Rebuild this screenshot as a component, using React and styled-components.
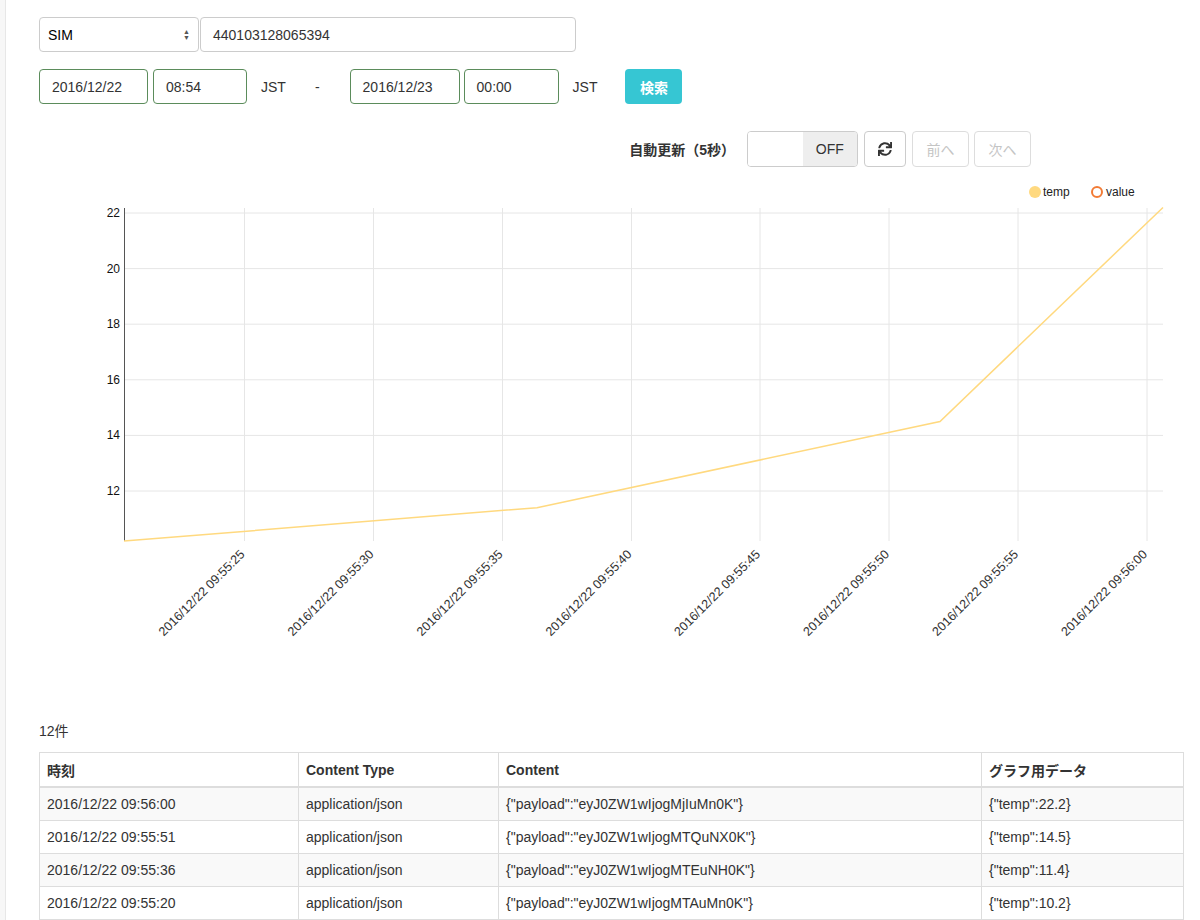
import React from "react";
import styled, { createGlobalStyle } from "styled-components";
import { FaSync } from "react-icons/fa";

const GlobalStyle = createGlobalStyle`
  html, body {
    margin: 0;
    padding: 0;
    background: #fff;
  }
  body {
    font-family: "Liberation Sans", "Noto Sans CJK JP", Arial, sans-serif;
    font-size: 14px;
    color: #333;
  }
`;

const Page = styled.div`
  display: flex;
  min-height: 920px;
`;

const SideEdge = styled.div`
  width: 5px;
  background: #f7f7f7;
  border-right: 1px solid #e7e7e7;
  flex-shrink: 0;
`;

const Main = styled.div`
  flex: 1;
  min-width: 0;
  padding: 17px 16px 0 33px;
`;

const Row = styled.div`
  display: flex;
  align-items: center;
  height: 35px;
  margin-bottom: ${(p) => p.mb || 0}px;
`;

const Select = styled.div`
  box-sizing: border-box;
  width: 160px;
  height: 35px;
  border: 1px solid #ccc;
  border-radius: 4px;
  padding: 0 8px;
  display: flex;
  align-items: center;
  justify-content: space-between;
  font-size: 14px;
  color: #000;
`;

const Arrows = styled.span`
  display: flex;
  flex-direction: column;
  font-size: 7px;
  line-height: 6px;
  color: #555;
`;

const Input = styled.div`
  box-sizing: border-box;
  width: ${(p) => p.w}px;
  height: 35px;
  margin-left: ${(p) => p.ml || 0}px;
  border: 1px solid ${(p) => (p.ok ? "#5b8c5b" : "#ccc")};
  border-radius: 4px;
  padding: 0 12px;
  display: flex;
  align-items: center;
  font-size: 14px;
  color: #333;
`;

const Label = styled.span`
  margin-left: ${(p) => p.ml || 0}px;
  font-size: 14px;
  color: #333;
`;

const SearchButton = styled.button`
  margin-left: 28px;
  width: 57px;
  height: 35px;
  border: none;
  border-radius: 4px;
  background: #36c6d3;
  color: #fff;
  font-family: inherit;
  font-size: 14px;
  font-weight: bold;
`;

const Toolbar = styled.div`
  display: flex;
  align-items: center;
  justify-content: flex-end;
  margin: 27px 153px 0 0;
`;

const ToolLabel = styled.span`
  font-weight: bold;
  font-size: 14px;
  color: #333;
  margin-right: 12px;
`;

const Switch = styled.div`
  box-sizing: border-box;
  width: 111px;
  height: 36px;
  border: 1px solid #ccc;
  border-radius: 4px;
  display: flex;
  overflow: hidden;
`;

const SwitchHalf = styled.div`
  flex: 1;
  background: ${(p) => (p.off ? "#eee" : "#fff")};
  display: flex;
  align-items: center;
  justify-content: center;
  font-size: 14px;
  color: #333;
`;

const ToolButton = styled.button`
  box-sizing: border-box;
  margin-left: ${(p) => p.ml || 6}px;
  width: ${(p) => p.w}px;
  height: 36px;
  border: 1px solid ${(p) => (p.disabled ? "#ddd" : "#ccc")};
  border-radius: 4px;
  background: #fff;
  color: ${(p) => (p.disabled ? "#c4c4c4" : "#333")};
  font-family: inherit;
  font-size: 14px;
  display: flex;
  align-items: center;
  justify-content: center;
  padding: 0;
`;

const ChartSvg = styled.svg`
  display: block;
  margin-top: 9px;
  font-family: "Liberation Sans", Arial, sans-serif;
`;

const Count = styled.div`
  font-size: 14px;
  color: #333;
  height: 20px;
  line-height: 20px;
  margin-bottom: 11px;
`;

const Table = styled.table`
  width: 100%;
  table-layout: fixed;
  border-collapse: collapse;
  font-size: 14px;
  color: #333;
`;

const Th = styled.th`
  text-align: left;
  font-weight: bold;
  height: 33px;
  padding: 0 7px;
  border: 1px solid #ddd;
  border-bottom: 2px solid #ddd;
  width: ${(p) => p.w || "auto"};
`;

const Tr = styled.tr`
  background: ${(p) => (p.odd ? "#f9f9f9" : "#fff")};
`;

const Td = styled.td`
  height: 32px;
  padding: 0 7px;
  border: 1px solid #ddd;
  white-space: nowrap;
`;

const rows = [
  ["2016/12/22 09:56:00", "application/json", '{"payload":"eyJ0ZW1wIjogMjIuMn0K"}', '{"temp":22.2}'],
  ["2016/12/22 09:55:51", "application/json", '{"payload":"eyJ0ZW1wIjogMTQuNX0K"}', '{"temp":14.5}'],
  ["2016/12/22 09:55:36", "application/json", '{"payload":"eyJ0ZW1wIjogMTEuNH0K"}', '{"temp":11.4}'],
  ["2016/12/22 09:55:20", "application/json", '{"payload":"eyJ0ZW1wIjogMTAuMn0K"}', '{"temp":10.2}'],
];

// chart drawn in page coordinates (viewBox offset)
const X0 = 124;
const X1 = 1163;
const Y_TOP = 207;
const Y_BOT = 540;
const yOf = (v) => 212 + (22 - v) * 27.8;
const yTicks = [22, 20, 18, 16, 14, 12];
const xTicks = [
  [244.5, "2016/12/22 09:55:25"],
  [373.5, "2016/12/22 09:55:30"],
  [502.5, "2016/12/22 09:55:35"],
  [631.5, "2016/12/22 09:55:40"],
  [760, "2016/12/22 09:55:45"],
  [889, "2016/12/22 09:55:50"],
  [1018, "2016/12/22 09:55:55"],
  [1147, "2016/12/22 09:56:00"],
];
const points = [
  [124, 10.2],
  [537, 11.4],
  [940, 14.5],
  [1163, 22.2],
];

function Chart() {
  return (
    <ChartSvg width="1145" height="545" viewBox="39 175 1145 545">
      {yTicks.map((v) => (
        <line key={v} x1={X0} x2={X1} y1={yOf(v)} y2={yOf(v)} stroke="#e6e6e6" />
      ))}
      {xTicks.map(([x]) => (
        <line key={x} x1={x} x2={x} y1={Y_TOP} y2={Y_BOT} stroke="#e6e6e6" />
      ))}
      <line x1={X0 + 0.5} x2={X0 + 0.5} y1={Y_TOP} y2={Y_BOT} stroke="#555" />
      {yTicks.map((v) => (
        <text key={v} x={120} y={yOf(v) + 4} textAnchor="end" fontSize="12" fill="#111">
          {v}
        </text>
      ))}
      {xTicks.map(([x, t]) => (
        <text
          key={t}
          x={x + 1}
          y={554}
          textAnchor="end"
          fontSize="12.6"
          fill="#333"
          transform={`rotate(-45 ${x + 1} 554)`}
        >
          {t}
        </text>
      ))}
      <polyline
        points={points.map(([x, v]) => `${x},${yOf(v)}`).join(" ")}
        fill="none"
        stroke="#ffd97f"
        strokeWidth="1.5"
      />
      <circle cx={1035} cy={191} r={6} fill="#ffd97f" />
      <text x={1043} y={195} fontSize="12" fill="#222">temp</text>
      <circle cx={1097} cy={191} r={5} fill="#fff" stroke="#f27b35" strokeWidth="2" />
      <text x={1106} y={195} fontSize="12" fill="#222">value</text>
    </ChartSvg>
  );
}

export default function App() {
  return (
    <>
      <GlobalStyle />
      <Page>
        <SideEdge />
        <Main>
          <Row mb={17}>
            <Select>
              SIM
              <Arrows>
                <span>▲</span>
                <span>▼</span>
              </Arrows>
            </Select>
            <Input w={376} ml={1}>440103128065394</Input>
          </Row>
          <Row>
            <Input ok w={109}>2016/12/22</Input>
            <Input ok w={94} ml={5}>08:54</Input>
            <Label ml={14}>JST</Label>
            <Label ml={29}>-</Label>
            <Input ok w={110} ml={30}>2016/12/23</Input>
            <Input ok w={95} ml={4}>00:00</Input>
            <Label ml={14}>JST</Label>
            <SearchButton>検索</SearchButton>
          </Row>
          <Toolbar>
            <ToolLabel>自動更新（5秒）</ToolLabel>
            <Switch>
              <SwitchHalf />
              <SwitchHalf off>OFF</SwitchHalf>
            </Switch>
            <ToolButton w={42}>
              <FaSync size={14} />
            </ToolButton>
            <ToolButton w={57} disabled>前へ</ToolButton>
            <ToolButton w={57} ml={5} disabled>次へ</ToolButton>
          </Toolbar>
          <Chart />
          <Count>12件</Count>
          <Table>
            <thead>
              <tr>
                <Th w="244px">時刻</Th>
                <Th w="185px">Content Type</Th>
                <Th w="468px">Content</Th>
                <Th>グラフ用データ</Th>
              </tr>
            </thead>
            <tbody>
              {rows.map((r, i) => (
                <Tr key={r[0]} odd={i % 2 === 0}>
                  {r.map((c, j) => (
                    <Td key={j}>{c}</Td>
                  ))}
                </Tr>
              ))}
            </tbody>
          </Table>
        </Main>
      </Page>
    </>
  );
}
